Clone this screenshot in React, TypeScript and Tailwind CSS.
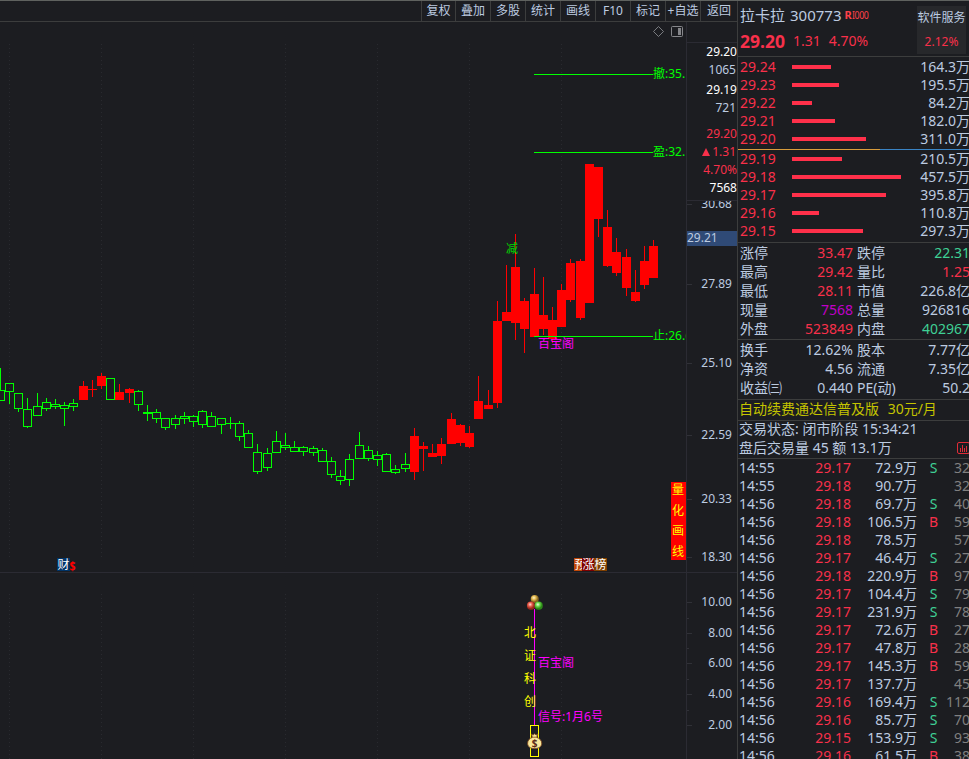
import clsx from 'clsx'

/** x of the body's left edge, body top/bottom, wick top/bottom, direction */
type Candle = [x: number, top: number, bottom: number, high: number, low: number, up: 0 | 1]

const CANDLES: Candle[] = [
  [-4, 390, 401, 368, 401, 0],
  [5, 383, 392, 383, 404, 0],
  [14, 393, 409, 393, 412, 0],
  [23, 409, 427, 398, 428, 0],
  [33, 406, 416, 393, 416, 0],
  [42, 402, 409, 398, 411, 0],
  [51, 404, 407, 399, 409, 0],
  [60, 405, 409, 402, 426, 0],
  [69, 403, 407, 399, 411, 0],
  [79, 386, 400, 381, 400, 1],
  [88, 389, 390, 380, 397, 1],
  [97, 376, 386, 373, 389, 1],
  [106, 378, 400, 378, 400, 0],
  [115, 392, 400, 384, 400, 1],
  [125, 389, 393, 388, 403, 1],
  [134, 391, 405, 390, 411, 0],
  [143, 412, 414, 405, 421, 0],
  [152, 412, 419, 409, 423, 0],
  [161, 418, 428, 418, 430, 0],
  [171, 418, 425, 415, 429, 0],
  [180, 416, 419, 412, 424, 0],
  [189, 416, 422, 415, 427, 0],
  [198, 411, 425, 410, 428, 0],
  [207, 416, 427, 412, 427, 0],
  [217, 418, 425, 418, 434, 0],
  [226, 423, 424, 417, 429, 0],
  [235, 423, 437, 421, 441, 0],
  [244, 433, 448, 430, 448, 0],
  [253, 452, 472, 444, 474, 0],
  [263, 453, 468, 448, 471, 0],
  [272, 441, 453, 431, 453, 0],
  [281, 445, 448, 433, 450, 0],
  [290, 447, 452, 441, 452, 0],
  [299, 447, 452, 446, 456, 0],
  [309, 448, 453, 446, 456, 0],
  [318, 450, 462, 448, 462, 0],
  [327, 461, 475, 457, 478, 0],
  [336, 476, 481, 470, 485, 0],
  [345, 459, 480, 454, 486, 0],
  [355, 445, 459, 432, 459, 0],
  [364, 450, 459, 446, 461, 0],
  [373, 455, 460, 451, 466, 0],
  [382, 454, 472, 453, 472, 0],
  [391, 469, 473, 465, 474, 0],
  [401, 464, 469, 453, 472, 0],
  [410, 436, 472, 428, 480, 1],
  [419, 446, 449, 442, 471, 1],
  [428, 453, 457, 444, 457, 1],
  [437, 444, 456, 438, 464, 1],
  [447, 419, 444, 413, 444, 1],
  [456, 425, 443, 424, 446, 1],
  [465, 433, 447, 426, 448, 1],
  [474, 401, 419, 376, 419, 1],
  [484, 405, 409, 390, 409, 1],
  [493, 321, 403, 301, 408, 1],
  [502, 312, 321, 265, 321, 1],
  [511, 267, 323, 234, 340, 1],
  [520, 301, 329, 298, 353, 1],
  [530, 294, 337, 268, 337, 1],
  [539, 315, 329, 277, 335, 1],
  [548, 320, 339, 307, 343, 1],
  [557, 290, 327, 284, 327, 1],
  [566, 263, 300, 259, 302, 1],
  [576, 261, 318, 259, 320, 1],
  [585, 164, 303, 164, 303, 1],
  [594, 167, 219, 167, 237, 1],
  [603, 227, 266, 210, 267, 1],
  [612, 252, 273, 238, 276, 1],
  [622, 257, 288, 249, 296, 1],
  [631, 292, 301, 270, 302, 1],
  [640, 261, 285, 246, 289, 1],
  [649, 246, 278, 240, 278, 1],
]

const GRID_X = [9, 101, 193, 285, 377, 469, 561]

const TARGETS = [
  { y: 74, label: '撤:35.' },
  { y: 152, label: '盈:32.' },
  { y: 336, label: '止:26.6' },
]

const PRICE_TICKS: [number, string][] = [
  [204, '30.68'],
  [284, '27.89'],
  [363, '25.10'],
  [435, '22.59'],
  [499, '20.33'],
  [557, '18.30'],
  [602, '10.00'],
  [633, '8.00'],
  [663, '6.00'],
  [694, '4.00'],
  [725, '2.00'],
]
const MINOR_TICKS = [618, 648, 679, 710]

const TOOLS = ['复权', '叠加', '多股', '统计', '画线', 'F10', '标记', '+自选', '返回']

const ASKS: [string, number, string][] = [
  ['29.24', 39, '164.3万'],
  ['29.23', 47, '195.5万'],
  ['29.22', 20, '84.2万'],
  ['29.21', 43, '182.0万'],
  ['29.20', 74, '311.0万'],
]
const BIDS: [string, number, string][] = [
  ['29.19', 50, '210.5万'],
  ['29.18', 109, '457.5万'],
  ['29.17', 94, '395.8万'],
  ['29.16', 27, '110.8万'],
  ['29.15', 71, '297.3万'],
]

const RED = 'text-[#f8304a]'
const GREEN = 'text-[#3fd095]'
const PLAIN = 'text-[#bccbe0]'

type Stat = [label: string, value: string, color: string, label2: string, value2: string, color2: string]

const STATS: Stat[] = [
  ['涨停', '33.47', RED, '跌停', '22.31', GREEN],
  ['最高', '29.42', RED, '量比', '1.25', RED],
  ['最低', '28.11', RED, '市值', '226.8亿', PLAIN],
  ['现量', '7568', 'text-[#c000c8]', '总量', '926816', PLAIN],
  ['外盘', '523849', RED, '内盘', '402967', GREEN],
]
const FUNDAMENTALS: Stat[] = [
  ['换手', '12.62%', PLAIN, '股本', '7.77亿', PLAIN],
  ['净资', '4.56', PLAIN, '流通', '7.35亿', PLAIN],
  ['收益㈢', '0.440', PLAIN, 'PE(动)', '50.2', PLAIN],
]

const TRADES: [string, string, string, string, string][] = [
  ['14:55', '29.17', '72.9万', 'S', '32'],
  ['14:55', '29.18', '90.7万', '', '32'],
  ['14:56', '29.18', '69.7万', 'S', '40'],
  ['14:56', '29.18', '106.5万', 'B', '59'],
  ['14:56', '29.18', '78.5万', '', '57'],
  ['14:56', '29.17', '46.4万', 'S', '27'],
  ['14:56', '29.18', '220.9万', 'B', '97'],
  ['14:56', '29.17', '104.4万', 'S', '79'],
  ['14:56', '29.17', '231.9万', 'S', '78'],
  ['14:56', '29.17', '72.6万', 'B', '27'],
  ['14:56', '29.17', '47.8万', 'B', '28'],
  ['14:56', '29.17', '145.3万', 'B', '59'],
  ['14:56', '29.17', '137.7万', '', '45'],
  ['14:56', '29.16', '169.4万', 'S', '112'],
  ['14:56', '29.16', '85.7万', 'S', '70'],
  ['14:56', '29.15', '153.9万', 'S', '93'],
  ['14:56', '29.16', '61.5万', 'B', '38'],
]

function CandleMark({ candle: [x, top, bottom, high, low, up] }: { candle: Candle }) {
  const color = up ? '#ff0000' : '#00ff00'
  const h = bottom - top
  return (
    <g fill={color}>
      {high < top && <rect x={x + 4} y={high} width="1" height={top - high} />}
      {low > bottom && <rect x={x + 4} y={bottom} width="1" height={low - bottom} />}
      {up || h <= 2 ? (
        <rect x={x} y={top} width="9" height={h} />
      ) : (
        <rect x={x + 0.5} y={top + 0.5} width="8" height={h - 1} fill="none" stroke={color} />
      )}
    </g>
  )
}

/** Stacked single glyphs, one per y position. */
function VerticalText({ text, x, ys }: { text: string; x: number; ys: number[] }) {
  return (
    <g fill="#ffff00">
      {ys.map((y, i) => (
        <text key={y} x={x} y={y + 4}>
          {text[i]}
        </text>
      ))}
    </g>
  )
}

// main price pane plus the signal pane below it
function Chart() {
  return (
    <svg width="686" height="737" viewBox="0 22 686 737" className="block shrink-0 text-[12px]" shapeRendering="crispEdges">
      <defs>
        <radialGradient id="gold" cx="40%" cy="35%">
          <stop offset="0" stopColor="#fff6cc" />
          <stop offset="0.5" stopColor="#e0b850" />
          <stop offset="1" stopColor="#8a6820" />
        </radialGradient>
        <radialGradient id="ruby" cx="40%" cy="35%">
          <stop offset="0" stopColor="#ffe0d8" />
          <stop offset="0.5" stopColor="#e85c4c" />
          <stop offset="1" stopColor="#98281c" />
        </radialGradient>
        <radialGradient id="jade" cx="40%" cy="35%">
          <stop offset="0" stopColor="#e8ffe0" />
          <stop offset="0.5" stopColor="#68d848" />
          <stop offset="1" stopColor="#2c8818" />
        </radialGradient>
      </defs>

      {GRID_X.map((x) => (
        <g key={x} stroke="#292a2f" strokeDasharray="1 3">
          <line x1={x + 0.5} y1="44" x2={x + 0.5} y2="558" />
          <line x1={x + 0.5} y1="594" x2={x + 0.5} y2="759" />
        </g>
      ))}
      <rect y="572" width="686" height="1" fill="#2b2b33" />

      <g fill="none" stroke="#85868a" shapeRendering="auto">
        <path d="M658.5 26.5l5 5-5 5-5-5z" strokeWidth="0.9" />
        <rect x="671.5" y="26.5" width="11" height="10" rx="1" />
        <rect x="678" y="28" width="3" height="7" fill="#85868a" stroke="none" />
      </g>

      {CANDLES.map((c) => (
        <CandleMark key={c[0]} candle={c} />
      ))}

      {TARGETS.map(({ y, label }) => (
        <g key={y} fill="#00ff00">
          <rect x="534" y={y} width="119" height="1" />
          <text x="653" y={y + 4}>
            {label}
          </text>
        </g>
      ))}

      <text x="506" y="253" fill="#00d800">减</text>
      <g fill="#ff00ff">
        <text x="538" y="348">百宝阁</text>
        <rect x="534" y="609" width="1" height="116" />
        <text x="538" y="667">百宝阁</text>
        <text x="538" y="721">信号:1月6号</text>
      </g>

      <rect x="671" y="482" width="15" height="78" fill="#ff0000" />
      <VerticalText text="量化画线" x={672} ys={[490, 511, 531, 552]} />
      <VerticalText text="北证科创" x={524} ys={[633, 656, 679, 702]} />

      <rect x="57" y="558" width="13" height="13" fill="#003468" />
      <text x="57.5" y="569" fill="#fff">财</text>
      <text x="69.5" y="570.5" fill="#ff0000" fontSize="12" fontWeight="700" textLength="6" lengthAdjust="spacingAndGlyphs">$</text>

      <rect x="574" y="558" width="12" height="13" fill="#c04808" />
      <text x="574.5" y="569" fill="#fff">预</text>
      <rect x="582" y="558" width="12" height="13" fill="#800000" />
      <text x="582.5" y="569" fill="#fff">涨</text>
      <rect x="594" y="558" width="13" height="13" fill="#804000" />
      <text x="594.5" y="569" fill="#fff">榜</text>

      <g shapeRendering="auto">
        <circle cx="534.7" cy="599" r="4" fill="url(#gold)" />
        <circle cx="531" cy="605.7" r="4.1" fill="url(#ruby)" />
        <circle cx="538.7" cy="605.7" r="4.1" fill="url(#jade)" />
      </g>

      <rect x="530.5" y="725.5" width="8" height="31" fill="none" stroke="#ffff00" />
      <g shapeRendering="auto">
        <path d="M531.5 734l1.6 1 1.5-1.2 1.6 1.2 1.6-1-1 3.4c3 1 4.9 3.2 4.9 5.8 0 3.3-2.6 5.3-7.1 5.3s-7-2-7-5.3c0-2.6 1.8-4.8 4.7-5.8z" fill="#f8e79c" stroke="#7d4a20" strokeWidth="0.9" />
        <path d="M532 737.2h5" stroke="#9c6a28" />
        <text x="534.6" y="746.8" textAnchor="middle" fontSize="10" fontWeight="700" fill="#5c2a18">$</text>
      </g>
    </svg>
  )
}

function PriceAxis() {
  return (
    <div className="relative w-[51px] shrink-0 border-l border-[#2b2b33]">
      <svg width="50" height="737" viewBox="687 22 50 737" className="block text-[12px]">
        {PRICE_TICKS.map(([y, label]) => (
          <g key={y}>
            <rect x="687" y={y} width="5" height="1" fill="#303137" />
            <text x="732" y={y + 4.2} textAnchor="end" fill="#bccbe0">
              {label}
            </text>
          </g>
        ))}
        {MINOR_TICKS.map((y) => (
          <rect key={y} x="687" y={y} width="2" height="1" fill="#303137" />
        ))}
        <rect x="687" y="572" width="50" height="1" fill="#2b2b33" />
      </svg>

      <div className="absolute top-0 right-0 left-0 h-[179px] border-b border-[#2b2b33] bg-[#1c1d21] pr-px text-right text-[12px] leading-[18px] text-white">
        <div className="-mr-px h-[21px] border-b border-[#2b2b33]" />
        <div className="-mr-px">29.20</div>
        <div className={PLAIN}>1065</div>
        <div className="-mr-px mt-0.5">29.19</div>
        <div className={PLAIN}>721</div>
        <div className={clsx('-mr-px mt-2', RED)}>29.20</div>
        <div className={clsx('flex items-center justify-end', RED)}>
          <svg width="8" height="8" viewBox="0 0 8 8" className="mr-0.5" fill="currentColor">
            <path d="M4 0l4 8H0z" />
          </svg>
          1.31
        </div>
        <div className={clsx('-mr-px', RED)}>4.70%</div>
        <div className="-mr-px">7568</div>
      </div>

      <div className="absolute top-[209px] left-0 h-[15px] w-[50px] bg-[#2f4a76] text-[12px] leading-[14px] text-[#bccbe0]">
        29.21
      </div>
    </div>
  )
}

function Toolbar() {
  return (
    <div className="flex h-[21px] shrink-0 justify-end border-b border-[#3c3d3d] text-[12px] leading-[20px] text-[#bccbe0]">
      {TOOLS.map((tool, i) => (
        <div
          key={tool}
          className={clsx(
            'overflow-hidden border-l border-[#3c3d3d] text-center whitespace-nowrap',
            i === 0 ? 'w-[34px]' : i === TOOLS.length - 1 ? 'w-[37px]' : 'w-[35px]',
          )}
        >
          {tool}
        </div>
      ))}
    </div>
  )
}

function DepthRow({ level: [price, bar, volume] }: { level: [string, number, string] }) {
  return (
    <div className="flex h-[18px] items-center leading-[18px]">
      <span className={clsx('w-[52px]', RED)}>{price}</span>
      <span className="h-1 bg-[#ff304a]" style={{ width: bar }} />
      <span className="ml-auto">{volume}</span>
    </div>
  )
}

function StatRows({ rows }: { rows: Stat[] }) {
  return rows.map(([label, value, color, label2, value2, color2]) => (
    <div key={label} className="flex h-[19px] leading-[19px] whitespace-nowrap">
      <span>{label}</span>
      <span className={clsx('w-0 grow text-right', color)}>{value}</span>
      <span className="flex w-[117px] justify-between pl-1">
        <span>{label2}</span>
        <span className={color2}>{value2}</span>
      </span>
    </div>
  ))
}

function QuotePanel() {
  return (
    <aside className="flex w-[232px] shrink-0 flex-col border-l border-[#3c3d3d] text-[14px] text-[#bccbe0]">
      <header className="flex h-[56px] shrink-0 justify-between border-b border-[#3c3d3d] pl-0.5">
        <div>
          <div className="mt-1 flex h-[21px] text-[15px] leading-[21px]">
            <span>拉卡拉</span>
            <span className="ml-[5px]">300773</span>
            <span className="ml-[3px] flex text-[11px] leading-[19px] text-[#ff4048]">
              <b>R</b>
              <span className="inline-block origin-left scale-x-80 tracking-[-0.5px]">I000</span>
            </span>
          </div>
          <div className={clsx('mt-[3px] flex h-6 items-center leading-6', RED)}>
            <b className="text-[17.5px]">29.20</b>
            <span className="ml-2">1.31</span>
            <span className="ml-2">4.70%</span>
          </div>
        </div>
        <div className="mt-[5px] mr-[3px] h-12 w-[49px] bg-[#27282b] text-center text-[12px] whitespace-nowrap">
          <div className="h-6 leading-6">软件服务</div>
          <div className={clsx('h-6 leading-6', RED)}>2.12%</div>
        </div>
      </header>

      <section className="-mr-px shrink-0 border-b border-[#3c3d3d] pt-px pl-0.5">
        {ASKS.map((level) => (
          <DepthRow key={level[0]} level={level} />
        ))}
        <div className="mt-px -ml-0.5 flex h-px">
          <div className="w-[142px] bg-[#d89c3c]" />
          <div className="grow bg-[#3a84c4]" />
        </div>
        {BIDS.map((level) => (
          <DepthRow key={level[0]} level={level} />
        ))}
        <div className="h-0.5" />
      </section>

      <section className="-mr-px shrink-0 border-b border-[#3c3d3d] pb-px pl-0.5">
        <StatRows rows={STATS} />
      </section>
      <section className="-mr-px h-[60px] shrink-0 border-b border-[#3c3d3d] pl-0.5">
        <StatRows rows={FUNDAMENTALS} />
      </section>

      <div className="h-[21px] shrink-0 border-b border-[#3c3d3d] pl-px leading-[18px] whitespace-pre text-[#c4c400]">
        自动续费通达信普及版 <span className="ml-[5px]">30元/月</span>
      </div>

      <section className="h-[38px] shrink-0 border-b border-[#3c3d3d] pl-px leading-[16px]">
        <div className="h-[18px]">交易状态: 闭市阶段 15:34:21</div>
        <div className="flex h-[19px] justify-between leading-[17px]">
          <span>盘后交易量 45 额 13.1万</span>
          <svg width="12" height="13" viewBox="0 0 12 13" className="mt-[3px] shrink-0 text-[#e02c38]" fill="none" stroke="currentColor">
            <rect x="0.5" y="0.5" width="12" height="11" rx="1.5" />
            <path d="M3.5 10V6M5.5 10V3M7.500 10V6M9.500 10V4" />
          </svg>
        </div>
      </section>

      <section className="-mr-px min-h-0 overflow-hidden pl-px">
        {TRADES.map(([time, price, volume, side, count], i) => (
          <div key={i} className="grid h-[18px] grid-cols-[60px_52px_66px_28px_1fr] leading-[18px]">
            <span>{time}</span>
            <span className={clsx('text-right', RED)}>{price}</span>
            <span className="text-right">{volume}</span>
            <span className={clsx('pl-[5px] text-center', side === 'S' ? GREEN : RED)}>{side}</span>
            <span className="text-right text-[#808080]">{count}</span>
          </div>
        ))}
      </section>
    </aside>
  )
}

export default function App() {
  return (
    <div className="flex h-[759px] w-[969px] overflow-hidden border-t border-[#5f625f] bg-[#1c1d21] font-['Noto_Sans','Noto_Sans_CJK_SC',sans-serif]">
      <main className="flex w-[737px] shrink-0 flex-col">
        <Toolbar />
        <div className="flex">
          <Chart />
          <PriceAxis />
        </div>
      </main>
      <QuotePanel />
    </div>
  )
}
